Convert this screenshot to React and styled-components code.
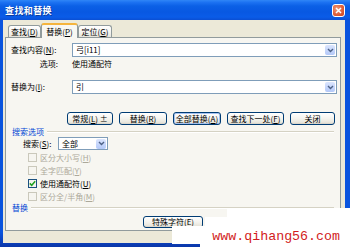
import React from "react";
import styled, { createGlobalStyle } from "styled-components";

const GlobalStyle = createGlobalStyle`
  html, body {
    margin: 0;
    padding: 0;
    background: #fff;
  }
  body {
    font-family: "Noto Sans CJK SC", "Noto Sans", sans-serif;
    color: #000;
  }
`;

function Acc({ label, k, tail = "" }) {
    return (
        <>
            {label}(<u>{k}</u>){tail}
        </>
    );
}

function ChevronIcon() {
    return (
        <svg width="7" height="5" viewBox="0 0 7 5">
            <path d="M1 1 L3.5 3.5 L6 1" fill="none" stroke="#4d6185" strokeWidth="1.4" />
        </svg>
    );
}

function App() {
    const checks = [
        { label: "区分大小写", k: "H", disabled: true },
        { label: "全字匹配", k: "Y", disabled: true },
        { label: "使用通配符", k: "U", checked: true },
        { label: "区分全/半角", k: "M", disabled: true },
    ];
    const buttons = [
        { w: 46, node: <Acc label="常规" k="L" tail=" ±" /> },
        { w: 48, node: <Acc label="替换" k="R" /> },
        { w: 48, node: <Acc label="全部替换" k="A" />, focus: true },
        { w: 57, node: <Acc label="查找下一处" k="F" /> },
        { w: 45, node: "关闭" },
    ];
    return (
        <Window>
            <GlobalStyle />
            <TitleBar>
                <Title>查找和替换</Title>
                <CloseButton>
                    <svg width="7" height="7" viewBox="0 0 7 7">
                        <path d="M1 1 L6 6 M6 1 L1 6" stroke="#fff" strokeWidth="1.5" />
                    </svg>
                </CloseButton>
            </TitleBar>
            <Body>
                <Tabs>
                    <Tab $w={33}>
                        <Acc label="查找" k="D" />
                    </Tab>
                    <Tab $w={37} $active>
                        <Acc label="替换" k="P" />
                    </Tab>
                    <Tab $w={34}>
                        <Acc label="定位" k="G" />
                    </Tab>
                </Tabs>
                <Panel>
                    <FieldRow>
                        <FieldLabel>
                            <Acc label="查找内容" k="N" tail=":" />
                        </FieldLabel>
                        <Combo>
                            <ComboText>弓[i11]</ComboText>
                            <DropButton>
                                <ChevronIcon />
                            </DropButton>
                        </Combo>
                    </FieldRow>
                    <OptionsRow>
                        <OptionsLabel>选项:</OptionsLabel>
                        <span>使用通配符</span>
                    </OptionsRow>
                    <FieldRow $top={11}>
                        <FieldLabel>
                            <Acc label="替换为" k="I" tail=":" />
                        </FieldLabel>
                        <Combo>
                            <ComboText>引</ComboText>
                            <DropButton>
                                <ChevronIcon />
                            </DropButton>
                        </Combo>
                    </FieldRow>
                    <ButtonRow>
                        {buttons.map((b, i) => (
                            <XpButton key={i} $w={b.w} $focus={b.focus}>
                                {b.node}
                            </XpButton>
                        ))}
                    </ButtonRow>
                    <GroupHeader $top={2}>
                        <GroupTitle>搜索选项</GroupTitle>
                        <GroupLine />
                    </GroupHeader>
                    <SearchRow>
                        <SearchLabel>
                            <Acc label="搜索" k="S" tail=":" />
                        </SearchLabel>
                        <Select>
                            <ComboText>全部</ComboText>
                            <DropButton>
                                <ChevronIcon />
                            </DropButton>
                        </Select>
                    </SearchRow>
                    <CheckList>
                        {checks.map((c, i) => (
                            <CheckRow key={i} $disabled={c.disabled}>
                                <CheckBox $disabled={c.disabled}>
                                    {c.checked && (
                                        <svg width="7" height="7" viewBox="0 0 7 7">
                                            <path
                                                d="M0.8 3.4 L2.7 5.3 L6.2 1.3"
                                                fill="none"
                                                stroke="#21a121"
                                                strokeWidth="1.5"
                                            />
                                        </svg>
                                    )}
                                </CheckBox>
                                <span>
                                    <Acc label={c.label} k={c.k} />
                                </span>
                            </CheckRow>
                        ))}
                    </CheckList>
                    <GroupHeader>
                        <GroupTitle>替换</GroupTitle>
                        <GroupLine />
                    </GroupHeader>
                    <SpecialRow>
                        <XpButton $w={60}>
                            <Acc label="特殊字符" k="E" />
                        </XpButton>
                    </SpecialRow>
                </Panel>
            </Body>
            <Watermark>
                <WatermarkText>www.qihang56.com</WatermarkText>
            </Watermark>
        </Window>
    );
}

const Window = styled.div`
    position: relative;
    width: 350px;
    height: 247px;
    display: flex;
    flex-direction: column;
    background: linear-gradient(to bottom, #0a54de 0%, #0a54de 94%, #0b36a8 100%);
    overflow: hidden;
`;
const TitleBar = styled.div`
    height: 20px;
    flex: none;
    display: flex;
    align-items: center;
    justify-content: space-between;
    padding: 0 5px 0 5px;
    background: linear-gradient(
        to bottom,
        #2f86f7 0%,
        #1c72f2 12%,
        #0b60e6 30%,
        #0858e2 60%,
        #0a5ce8 85%,
        #0a4fd4 100%
    );
`;
const Title = styled.span`
    color: #fff;
    font-size: 9px;
    font-weight: bold;
    letter-spacing: 0.4px;
    text-shadow: 1px 1px 0 #0a3a9c;
`;
const CloseButton = styled.div`
    width: 13px;
    height: 13px;
    box-sizing: border-box;
    border: 1px solid #fff;
    border-radius: 3px;
    background: radial-gradient(circle at 35% 35%, #f09a78 0%, #e0613b 55%, #c9401c 100%);
    display: flex;
    align-items: center;
    justify-content: center;
`;
const Body = styled.div`
    flex: 1;
    margin: 0 5px 4px 3px;
    background: #ece9d8;
    display: flex;
    flex-direction: column;
`;
const Tabs = styled.div`
    height: 17px;
    flex: none;
    display: flex;
    align-items: flex-end;
    padding-left: 5px;
`;
const Tab = styled.div`
    position: relative;
    width: ${(p) => p.$w}px;
    height: ${(p) => (p.$active ? 15 : 12)}px;
    margin-bottom: ${(p) => (p.$active ? -1 : 0)}px;
    z-index: ${(p) => (p.$active ? 2 : 1)};
    box-sizing: border-box;
    border: 1px solid #919b9c;
    border-bottom: none;
    border-top: ${(p) => (p.$active ? "2px solid #f5b43c" : "1px solid #919b9c")};
    border-radius: 3px 3px 0 0;
    background: ${(p) =>
        p.$active
            ? "#f8f7f2"
            : "linear-gradient(to bottom, #ffffff 0%, #f3f3ef 60%, #e6e4da 100%)"};
    font-size: 8px;
    line-height: 1;
    display: flex;
    align-items: center;
    justify-content: center;
    white-space: nowrap;
`;
const Panel = styled.div`
    margin: 0 4px 0 2px;
    border: 1px solid #919b9c;
    background: #f7f6f1;
    padding: 5px 3px 2px 4px;
    font-size: 8px;
    line-height: 1;
    display: flex;
    flex-direction: column;
`;
const FieldRow = styled.div`
    height: 14px;
    margin-top: ${(p) => p.$top || 0}px;
    display: grid;
    grid-template-columns: 62px 1fr;
    align-items: center;
`;
const FieldLabel = styled.span`
    white-space: nowrap;
    padding-left: 1px;
`;
const Combo = styled.div`
    height: 14px;
    box-sizing: border-box;
    border: 1px solid #7f9db9;
    background: #fff;
    display: flex;
    align-items: center;
`;
const ComboText = styled.span`
    padding-left: 3px;
    font-size: 8px;
`;
const DropButton = styled.div`
    margin-left: auto;
    margin-right: 1px;
    width: 10px;
    height: 10px;
    border-radius: 2px;
    background: linear-gradient(to bottom, #dbe5fd 0%, #c3d4fb 60%, #b3c8f8 100%);
    border: 0;
    display: flex;
    align-items: center;
    justify-content: center;
`;
const OptionsRow = styled.div`
    height: 10px;
    margin-top: 2px;
    display: grid;
    grid-template-columns: 62px 1fr;
    align-items: center;
`;
const OptionsLabel = styled.span`
    justify-self: end;
    margin-right: 14px;
`;
const ButtonRow = styled.div`
    margin-top: 18px;
    height: 13px;
    display: flex;
    gap: 6px;
    padding-left: 57px;
`;
const XpButton = styled.div`
    width: ${(p) => p.$w}px;
    height: 13px;
    box-sizing: border-box;
    border: 1px solid #003c74;
    border-radius: 3px;
    background: linear-gradient(to bottom, #ffffff 0%, #f4f3ee 50%, #e8e6dd 85%, #d6d0c5 100%);
    box-shadow: ${(p) => (p.$focus ? "inset 0 0 0 1px #a6c2f0" : "none")};
    display: flex;
    align-items: center;
    justify-content: center;
    font-size: 8px;
    white-space: nowrap;
    overflow: hidden;
`;
const GroupHeader = styled.div`
    height: 10px;
    margin-top: ${(p) => p.$top || 0}px;
    margin-left: 2px;
    margin-right: 3px;
    display: flex;
    align-items: center;
    gap: 3px;
`;
const GroupTitle = styled.span`
    color: #0046d5;
    white-space: nowrap;
`;
const GroupLine = styled.div`
    flex: 1;
    height: 1px;
    background: #d5d2c4;
    border-bottom: 1px solid #fff;
`;
const SearchRow = styled.div`
    height: 13px;
    padding-left: 13px;
    display: flex;
    align-items: center;
`;
const SearchLabel = styled.span`
    width: 35px;
    white-space: nowrap;
`;
const Select = styled(Combo)`
    width: 50px;
    height: 13px;
`;
const CheckList = styled.div`
    margin-top: 1px;
    display: flex;
    flex-direction: column;
`;
const CheckRow = styled.div`
    height: 13px;
    padding-left: 18px;
    display: flex;
    align-items: center;
    gap: 3px;
    color: ${(p) => (p.$disabled ? "#aca899" : "#000")};
`;
const CheckBox = styled.div`
    width: 9px;
    height: 9px;
    box-sizing: border-box;
    border: 1px solid ${(p) => (p.$disabled ? "#cac8bb" : "#1c5180")};
    background: ${(p) => (p.$disabled ? "#f6f5f0" : "#f4f4f0")};
    display: flex;
    align-items: center;
    justify-content: center;
`;
const SpecialRow = styled.div`
    margin-top: 3px;
    height: 12px;
    padding-left: 133px;
    display: flex;
    & > div {
        height: 12px;
    }
`;
const Watermark = styled.div`
    position: absolute;
    left: 172px;
    top: 208px;
    width: 178px;
    height: 39px;
    background: #fff;
    clip-path: polygon(
        55px 0,
        178px 0,
        178px 39px,
        28px 39px,
        28px 36px,
        0 36px,
        0 18px,
        33px 18px,
        33px 9px,
        55px 9px
    );
    display: flex;
    align-items: flex-end;
    justify-content: flex-end;
    padding: 0 10px 4px 0;
    box-sizing: border-box;
`;
const WatermarkText = styled.span`
    font-family: "Liberation Mono", "DejaVu Sans Mono", monospace;
    font-size: 13.3px;
    line-height: 1;
    color: #d21c1c;
`;

export default App;
